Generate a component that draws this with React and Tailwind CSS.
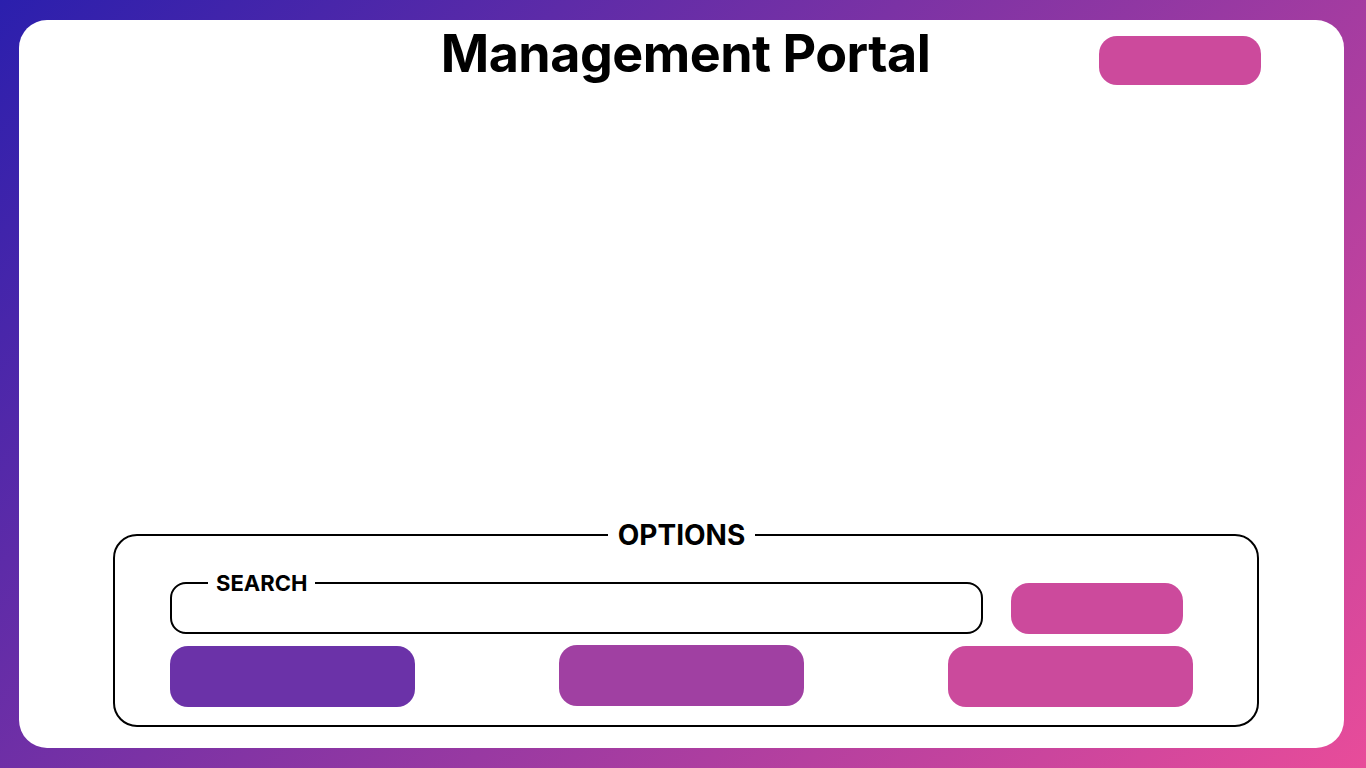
export default function App() {
  return (
    <div
      className="h-screen w-full bg-[linear-gradient(135deg,#2b1fad_0%,#e84c9a_100%)] pl-[19px] pr-[22px] pt-[20px] pb-[20px] overflow-hidden"
      style={{ fontFamily: "Inter, 'Noto Sans', sans-serif" }}
    >
      <div className="h-full w-full bg-white rounded-[28px] flex flex-col">
        <div className="grid grid-cols-[1fr_auto_1fr] items-start">
          <div />
          <h1 className="text-[52px] leading-[60px] font-bold text-black tracking-[-0.5px] pt-[4px] pl-[8px]">
            Management Portal
          </h1>
          <div className="flex justify-end pr-[83px] pt-[16px]">
            <button className="w-[162px] h-[49px] rounded-[18px] bg-[#cc4a9c]" />
          </div>
        </div>
        <div className="flex-1" />
        <fieldset className="ml-[94px] mr-[85px] mb-[21px] border-2 border-black rounded-[24px] pl-[55px] pr-[64px] pb-[18px]">
          <legend className="mx-auto px-[10px] text-[28px] leading-[30px] font-bold text-black">
            OPTIONS
          </legend>
          <div className="flex flex-col gap-[12px] pt-[25px]">
            <div className="flex items-end gap-[28px]">
              <fieldset className="w-[813px] h-[59px] border-2 border-black rounded-[16px] pl-[36px]">
                <legend className="px-[8px] text-[22px] leading-[16px] font-bold text-black">
                  SEARCH
                </legend>
              </fieldset>
              <button className="w-[172px] h-[51px] rounded-[18px] bg-[#cc4a9c]" />
            </div>
            <div className="flex gap-[144px]">
              <button className="w-[245px] h-[61px] rounded-[18px] bg-[#6b32a8]" />
              <button className="w-[245px] h-[61px] rounded-[18px] bg-[#a040a2] -mt-[1px]" />
              <button className="w-[245px] h-[61px] rounded-[18px] bg-[#cb4a9c]" />
            </div>
          </div>
        </fieldset>
      </div>
    </div>
  );
}
